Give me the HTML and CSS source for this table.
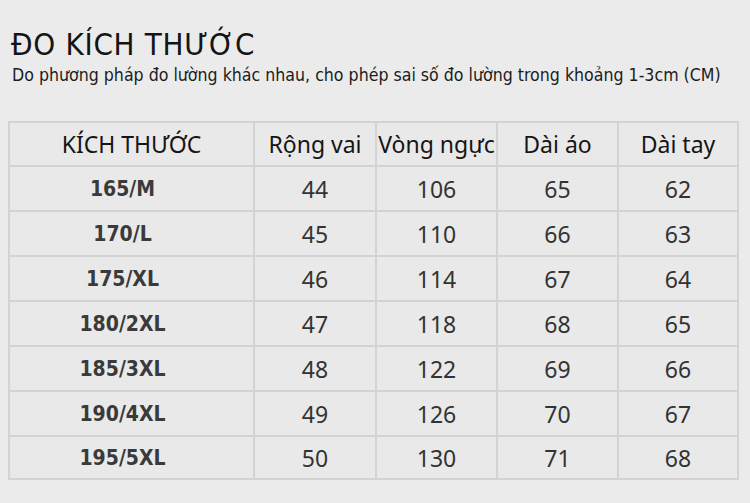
FILE: index.html
```html
<!DOCTYPE html>
<html lang="vi">
<head>
<meta charset="utf-8">
<title>Đo kích thước</title>
<link rel="stylesheet" href="styles.css">
</head>
<body>
<div class="page">
  <h1 class="title">ĐO KÍCH THƯỚC</h1>
  <p class="note">Do phương pháp đo lường khác nhau, cho phép sai số đo lường trong khoảng 1-3cm (CM)</p>
  <table class="sizes">
    <colgroup>
      <col class="c1"><col class="c2"><col class="c3"><col class="c4"><col class="c5">
    </colgroup>
    <thead>
      <tr><th>KÍCH THƯỚC</th><th>Rộng vai</th><th>Vòng ngực</th><th>Dài áo</th><th>Dài tay</th></tr>
    </thead>
    <tbody>
      <tr><td class="size">165/M</td><td>44</td><td>106</td><td>65</td><td>62</td></tr>
      <tr><td class="size">170/L</td><td>45</td><td>110</td><td>66</td><td>63</td></tr>
      <tr><td class="size">175/XL</td><td>46</td><td>114</td><td>67</td><td>64</td></tr>
      <tr><td class="size">180/2XL</td><td>47</td><td>118</td><td>68</td><td>65</td></tr>
      <tr><td class="size">185/3XL</td><td>48</td><td>122</td><td>69</td><td>66</td></tr>
      <tr><td class="size">190/4XL</td><td>49</td><td>126</td><td>70</td><td>67</td></tr>
      <tr class="last"><td class="size">195/5XL</td><td>50</td><td>130</td><td>71</td><td>68</td></tr>
    </tbody>
  </table>
</div>
</body>
</html>
```
FILE: styles.css
```css
html, body {
  margin: 0;
  padding: 0;
  background: #ebebeb;
}
.page {
  width: 750px;
  height: 503px;
  padding-top: 26px;
  box-sizing: border-box;
  font-family: "Noto Sans", "DejaVu Sans", sans-serif;
  color: #1a1a1a;
  overflow: hidden;
}
.title {
  margin: 0 0 0 11px;
  font-family: "DejaVu Sans Condensed", "DejaVu Sans", sans-serif;
  font-stretch: condensed;
  font-size: 31px;
  line-height: 36px;
  font-weight: 400;
  letter-spacing: 0.7px;
  color: #141414;
}
.note {
  margin: 1px 0 0 12px;
  font-family: "DejaVu Sans Condensed", "DejaVu Sans", sans-serif;
  font-stretch: condensed;
  font-size: 17.6px;
  line-height: 24px;
  color: #1c1c1c;
  white-space: nowrap;
}
.sizes {
  margin: 34px 0 0 8px;
  width: 729px;
  table-layout: fixed;
  border-collapse: collapse;
  border: 2px solid #d3d3d3;
  background: #e9e9e9;
}
.c1 { width: 245px; }
.c2 { width: 122px; }
.c3 { width: 121px; }
.c4 { width: 121px; }
.c5 { width: 120px; }
.sizes th, .sizes td {
  border: 2px solid #d3d3d3;
  padding: 0;
  text-align: center;
  vertical-align: middle;
  white-space: nowrap;
}
.sizes th {
  height: 42px;
  font-size: 23px;
  font-weight: 400;
  color: #151515;
}
.sizes td {
  height: 43px;
  font-size: 23px;
  color: #333333;
}
.sizes td.size {
  font-family: "DejaVu Sans Condensed", "DejaVu Sans", sans-serif;
  font-stretch: condensed;
  font-weight: 700;
  font-size: 21px;
  color: #3a3a3a;
  padding-right: 18px;
}
.sizes .last td {
  height: 41px;
}
```
